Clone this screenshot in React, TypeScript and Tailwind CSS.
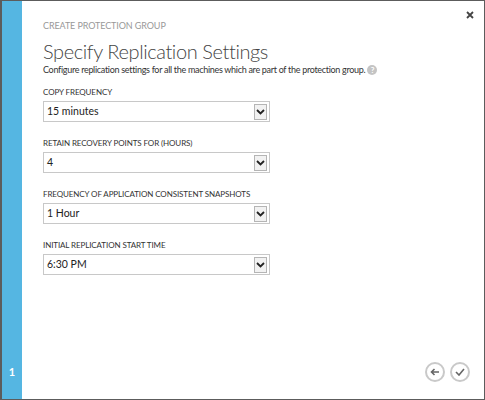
import React from "react";

const font = { fontFamily: 'Lato, "Noto Sans", sans-serif' };

function Field({ label, value }: { label: string; value: string }) {
  return (
    <div className="flex flex-col">
      <div className="text-[8px] leading-[11px] text-[#333] tracking-[-0.1px]">{label}</div>
      <div className="mt-[3px] w-[227px] h-[21px] border border-[#c8c8c8] bg-white flex items-center justify-between pl-[3px] pr-[2px]">
        <span className="text-[10.5px] text-[#222]">{value}</span>
        <div className="w-[13px] h-[16px] border border-[#b5b5b5] bg-[#f2f2f2] flex items-center justify-center">
          <svg width="9" height="6" viewBox="0 0 9 6">
            <path d="M1 1 L4.5 4.5 L8 1" stroke="#222" strokeWidth="1.8" fill="none" />
          </svg>
        </div>
      </div>
    </div>
  );
}

export default function App() {
  return (
    <div
      className="w-[485px] h-[400px] bg-white border border-[#5c5c5c] border-l-2 flex overflow-hidden"
      style={font}
    >
      <div className="w-[20px] bg-[#55b6e2] flex flex-col justify-end items-center pb-[22px]">
        <span className="text-white text-[11px] font-bold leading-none">1</span>
      </div>
      <div className="flex-1 flex flex-col pl-[21px] pr-[10px] pt-[19px] relative">
        <div className="absolute right-[10px] top-[10px] text-[#444]">
          <svg width="8" height="8" viewBox="0 0 8 8">
            <path d="M1 1 L7 7 M7 1 L1 7" stroke="#444" strokeWidth="1.8" />
          </svg>
        </div>
        <div className="text-[9px] text-[#999] leading-[12px] tracking-[-0.1px]">CREATE PROTECTION GROUP</div>
        <div className="text-[20px] font-light text-[#444] leading-[24px] mt-[7px] tracking-[-0.4px]">Specify Replication Settings</div>
        <div className="flex items-center text-[9px] text-[#333] leading-[13px] tracking-[-0.3px]">
          <span>Configure replication settings for all the machines which are part of the protection group.</span>
          <span className="ml-[2px] w-[10px] h-[10px] rounded-full bg-[#c4c4c4] text-white text-[8px] font-bold flex items-center justify-center leading-none">?</span>
        </div>
        <div className="flex flex-col gap-[16px] mt-[11px]">
          <Field label="COPY FREQUENCY" value="15 minutes" />
          <Field label="RETAIN RECOVERY POINTS FOR (HOURS)" value="4" />
          <Field label="FREQUENCY OF APPLICATION CONSISTENT SNAPSHOTS" value="1 Hour" />
          <Field label="INITIAL REPLICATION START TIME" value="6:30 PM" />
        </div>
        <div className="flex-1" />
        <div className="flex justify-end gap-[5px] pb-[17px] pr-[4px]">
          <div className="w-[20px] h-[20px] rounded-full border-2 border-[#c9c9c9] flex items-center justify-center">
            <svg width="10" height="8" viewBox="0 0 10 8">
              <path d="M9 4 H2 M4.5 1 L1.5 4 L4.5 7" stroke="#666" strokeWidth="1.6" fill="none" />
            </svg>
          </div>
          <div className="w-[20px] h-[20px] rounded-full border-2 border-[#c9c9c9] flex items-center justify-center">
            <svg width="10" height="8" viewBox="0 0 10 8">
              <path d="M1 4 L4 7 L9 1" stroke="#666" strokeWidth="1.6" fill="none" />
            </svg>
          </div>
        </div>
      </div>
    </div>
  );
}
